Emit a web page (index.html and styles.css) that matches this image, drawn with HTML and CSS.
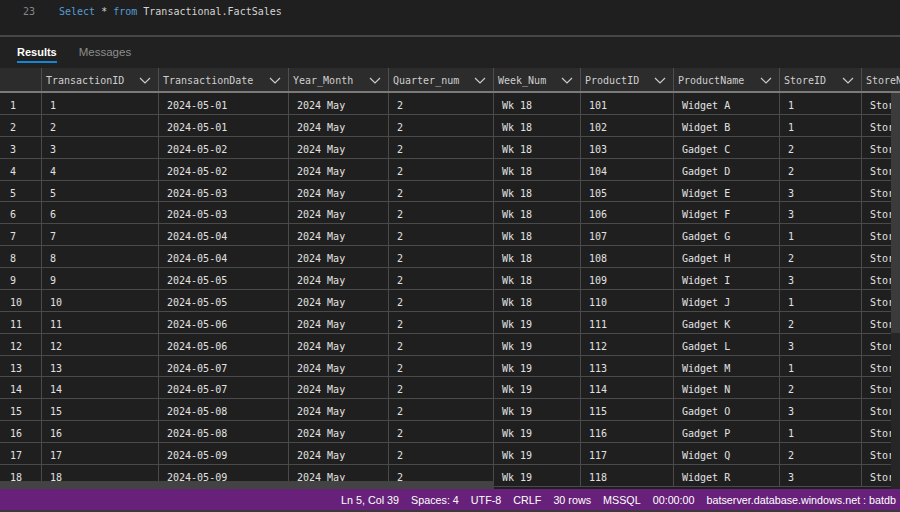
FILE: index.html
```html
<!DOCTYPE html>
<html>
<head>
<meta charset="utf-8">
<link rel="stylesheet" href="styles.css">
</head>
<body>
<div class="app">
  <div class="editor">
    <span class="ln">23</span>
    <span class="code"><span class="kw">Select</span> * <span class="kw">from</span> Transactional.FactSales</span>
  </div>
  <div class="tabs">
    <div class="tab active">Results</div>
    <div class="tab">Messages</div>
  </div>
  <div class="grid">
    <div class="hrow">
      <div class="hc rn"></div>
      <div class="hc"><span>TransactionID</span><svg class="chev" viewBox="0 0 12 7"><polyline points="1,1 6,6 11,1"/></svg></div>
      <div class="hc"><span>TransactionDate</span><svg class="chev" viewBox="0 0 12 7"><polyline points="1,1 6,6 11,1"/></svg></div>
      <div class="hc"><span>Year_Month</span><svg class="chev" viewBox="0 0 12 7"><polyline points="1,1 6,6 11,1"/></svg></div>
      <div class="hc"><span>Quarter_num</span><svg class="chev" viewBox="0 0 12 7"><polyline points="1,1 6,6 11,1"/></svg></div>
      <div class="hc"><span>Week_Num</span><svg class="chev" viewBox="0 0 12 7"><polyline points="1,1 6,6 11,1"/></svg></div>
      <div class="hc"><span>ProductID</span><svg class="chev" viewBox="0 0 12 7"><polyline points="1,1 6,6 11,1"/></svg></div>
      <div class="hc"><span>ProductName</span><svg class="chev" viewBox="0 0 12 7"><polyline points="1,1 6,6 11,1"/></svg></div>
      <div class="hc"><span>StoreID</span><svg class="chev" viewBox="0 0 12 7"><polyline points="1,1 6,6 11,1"/></svg></div>
      <div class="hc"><span>StoreName</span></div>
    </div>
    <div class="gbody">
      <div class="rows">
        <div class="row"><div class="c rn">1</div><div class="c">1</div><div class="c">2024-05-01</div><div class="c">2024 May</div><div class="c">2</div><div class="c">Wk 18</div><div class="c">101</div><div class="c">Widget A</div><div class="c">1</div><div class="c">Store</div></div>
        <div class="row"><div class="c rn">2</div><div class="c">2</div><div class="c">2024-05-01</div><div class="c">2024 May</div><div class="c">2</div><div class="c">Wk 18</div><div class="c">102</div><div class="c">Widget B</div><div class="c">1</div><div class="c">Store</div></div>
        <div class="row"><div class="c rn">3</div><div class="c">3</div><div class="c">2024-05-02</div><div class="c">2024 May</div><div class="c">2</div><div class="c">Wk 18</div><div class="c">103</div><div class="c">Gadget C</div><div class="c">2</div><div class="c">Store</div></div>
        <div class="row"><div class="c rn">4</div><div class="c">4</div><div class="c">2024-05-02</div><div class="c">2024 May</div><div class="c">2</div><div class="c">Wk 18</div><div class="c">104</div><div class="c">Gadget D</div><div class="c">2</div><div class="c">Store</div></div>
        <div class="row"><div class="c rn">5</div><div class="c">5</div><div class="c">2024-05-03</div><div class="c">2024 May</div><div class="c">2</div><div class="c">Wk 18</div><div class="c">105</div><div class="c">Widget E</div><div class="c">3</div><div class="c">Store</div></div>
        <div class="row"><div class="c rn">6</div><div class="c">6</div><div class="c">2024-05-03</div><div class="c">2024 May</div><div class="c">2</div><div class="c">Wk 18</div><div class="c">106</div><div class="c">Widget F</div><div class="c">3</div><div class="c">Store</div></div>
        <div class="row"><div class="c rn">7</div><div class="c">7</div><div class="c">2024-05-04</div><div class="c">2024 May</div><div class="c">2</div><div class="c">Wk 18</div><div class="c">107</div><div class="c">Gadget G</div><div class="c">1</div><div class="c">Store</div></div>
        <div class="row"><div class="c rn">8</div><div class="c">8</div><div class="c">2024-05-04</div><div class="c">2024 May</div><div class="c">2</div><div class="c">Wk 18</div><div class="c">108</div><div class="c">Gadget H</div><div class="c">2</div><div class="c">Store</div></div>
        <div class="row"><div class="c rn">9</div><div class="c">9</div><div class="c">2024-05-05</div><div class="c">2024 May</div><div class="c">2</div><div class="c">Wk 18</div><div class="c">109</div><div class="c">Widget I</div><div class="c">3</div><div class="c">Store</div></div>
        <div class="row"><div class="c rn">10</div><div class="c">10</div><div class="c">2024-05-05</div><div class="c">2024 May</div><div class="c">2</div><div class="c">Wk 18</div><div class="c">110</div><div class="c">Widget J</div><div class="c">1</div><div class="c">Store</div></div>
        <div class="row"><div class="c rn">11</div><div class="c">11</div><div class="c">2024-05-06</div><div class="c">2024 May</div><div class="c">2</div><div class="c">Wk 19</div><div class="c">111</div><div class="c">Gadget K</div><div class="c">2</div><div class="c">Store</div></div>
        <div class="row"><div class="c rn">12</div><div class="c">12</div><div class="c">2024-05-06</div><div class="c">2024 May</div><div class="c">2</div><div class="c">Wk 19</div><div class="c">112</div><div class="c">Gadget L</div><div class="c">3</div><div class="c">Store</div></div>
        <div class="row"><div class="c rn">13</div><div class="c">13</div><div class="c">2024-05-07</div><div class="c">2024 May</div><div class="c">2</div><div class="c">Wk 19</div><div class="c">113</div><div class="c">Widget M</div><div class="c">1</div><div class="c">Store</div></div>
        <div class="row"><div class="c rn">14</div><div class="c">14</div><div class="c">2024-05-07</div><div class="c">2024 May</div><div class="c">2</div><div class="c">Wk 19</div><div class="c">114</div><div class="c">Widget N</div><div class="c">2</div><div class="c">Store</div></div>
        <div class="row"><div class="c rn">15</div><div class="c">15</div><div class="c">2024-05-08</div><div class="c">2024 May</div><div class="c">2</div><div class="c">Wk 19</div><div class="c">115</div><div class="c">Gadget O</div><div class="c">3</div><div class="c">Store</div></div>
        <div class="row"><div class="c rn">16</div><div class="c">16</div><div class="c">2024-05-08</div><div class="c">2024 May</div><div class="c">2</div><div class="c">Wk 19</div><div class="c">116</div><div class="c">Gadget P</div><div class="c">1</div><div class="c">Store</div></div>
        <div class="row"><div class="c rn">17</div><div class="c">17</div><div class="c">2024-05-09</div><div class="c">2024 May</div><div class="c">2</div><div class="c">Wk 19</div><div class="c">117</div><div class="c">Widget Q</div><div class="c">2</div><div class="c">Store</div></div>
        <div class="row"><div class="c rn">18</div><div class="c">18</div><div class="c">2024-05-09</div><div class="c">2024 May</div><div class="c">2</div><div class="c">Wk 19</div><div class="c">118</div><div class="c">Widget R</div><div class="c">3</div><div class="c">Store</div></div>
        <div class="hscroll"></div>
      </div>
      <div class="vscroll"><div class="vthumb"></div></div>
    </div>
  </div>
  <div class="status">
    <span>Ln 5, Col 39</span>
    <span>Spaces: 4</span>
    <span>UTF-8</span>
    <span>CRLF</span>
    <span>30 rows</span>
    <span>MSSQL</span>
    <span>00:00:00</span>
    <span>batserver.database.windows.net : batdb</span>
  </div>
</div>
</body>
</html>
```

FILE: styles.css
```css
* { box-sizing: border-box; }
html, body { margin: 0; padding: 0; }
body {
  background: #212121;
  width: 900px;
  height: 512px;
  overflow: hidden;
}
.app {
  display: flex;
  flex-direction: column;
  height: 512px;
  width: 900px;
}
.editor {
  height: 37px;
  flex: none;
  display: flex;
  align-items: flex-start;
  padding-top: 5px;
  border-bottom: 2px solid #474747;
  background: #1f1f1f;
  font-family: "DejaVu Sans Mono", "Liberation Mono", monospace;
  font-size: 10px;
  line-height: 13px;
  color: #d4d4d4;
}
.ln {
  width: 59px;
  padding-left: 23px;
  color: #858585;
  flex: none;
}
.code { white-space: pre; }
.kw { color: #569cd6; }

.tabs {
  height: 31px;
  flex: none;
  display: flex;
  gap: 22px;
  padding-left: 17px;
  padding-top: 8px;
  background: #212121;
  font-family: "Liberation Sans", Arial, sans-serif;
  font-size: 11.5px;
}
.tab {
  height: 18px;
  line-height: 14px;
  color: #8d8d8d;
}
.tab.active {
  color: #ffffff;
  font-weight: bold;
  font-size: 11px;
  border-bottom: 2px solid #1585d8;
}

.grid {
  flex: 1;
  display: flex;
  flex-direction: column;
  min-height: 0;
  font-family: "DejaVu Sans Mono", "Liberation Mono", monospace;
  font-size: 10px;
}
.hrow, .row {
  display: grid;
  grid-template-columns: 42px 117px 130px 100px 105px 87px 93px 106px 82px 200px;
  white-space: nowrap;
}
.hrow {
  height: 25px;
  flex: none;
  background: #2c2c2c;
  border-bottom: 2px solid #7a7a7a;
  overflow: hidden;
  color: #cfcfcf;
}
.hc {
  display: flex;
  align-items: center;
  justify-content: space-between;
  padding: 1px 7px 0 4px;
  border-right: 1px solid #4f4f4f;
  overflow: hidden;
}
.chev {
  width: 12px;
  height: 7px;
  flex: none;
  fill: none;
  stroke: #cccccc;
  stroke-width: 1.2;
}
.gbody {
  flex: 1;
  display: flex;
  min-height: 0;
}
.rows {
  flex: 1;
  position: relative;
  overflow: hidden;
  background: #1f1f1f;
}
.row {
  height: 21.875px;
  border-bottom: 1px solid #4a4a4a;
  color: #e2e2e2;
}
.c {
  padding-left: 8px;
  padding-top: 6px;
  line-height: 14px;
  border-right: 1px solid #4a4a4a;
  overflow: hidden;
}
.c.rn { padding-left: 10px; }
.hscroll {
  position: absolute;
  left: 0;
  bottom: 0;
  width: 494px;
  height: 8px;
  background: #434343;
}
.vscroll {
  width: 9px;
  flex: none;
  background: #262626;
}
.vthumb {
  height: 240px;
  background: #3b3b3b;
}

.status {
  height: 23px;
  flex: none;
  display: flex;
  justify-content: flex-end;
  align-items: center;
  gap: 12px;
  padding-right: 4px;
  background: #68217a;
  border-bottom: 2px solid #3a3a3a;
  color: #ffffff;
  font-family: "Liberation Sans", Arial, sans-serif;
  font-size: 10.75px;
  white-space: nowrap;
}
```
